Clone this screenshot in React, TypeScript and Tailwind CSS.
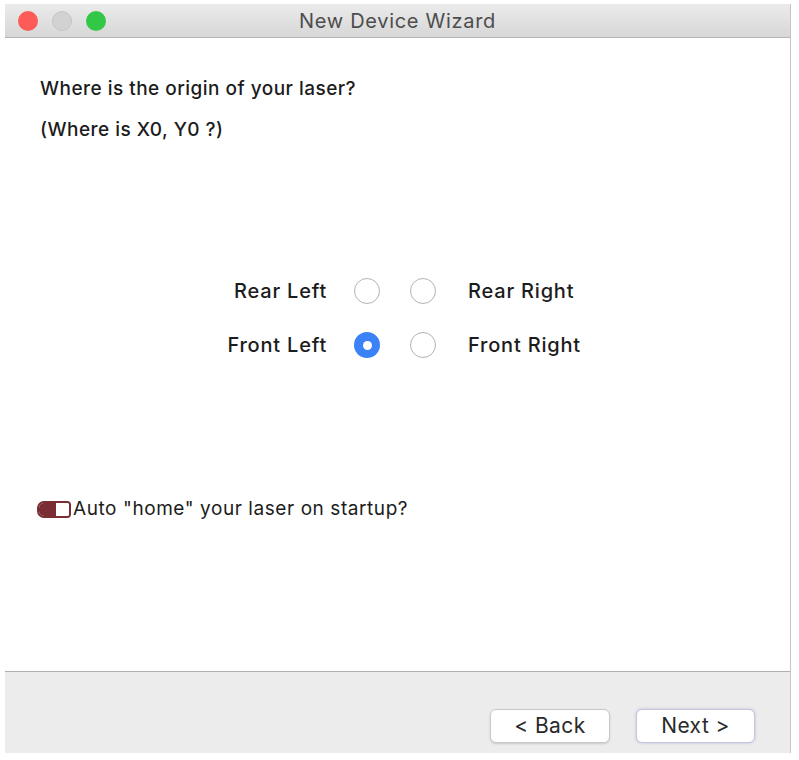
import React from "react"

const font = { fontFamily: "Inter, 'Liberation Sans', sans-serif" }

function Radio({ checked }: { checked?: boolean }) {
  if (checked) {
    return (
      <div className="w-[26px] h-[26px] rounded-full bg-[#3b82f6] flex items-center justify-center">
        <div className="w-[9px] h-[9px] rounded-full bg-white" />
      </div>
    )
  }
  return <div className="w-[26px] h-[26px] rounded-full border-[1.5px] border-[#b3b3b3] bg-white" />
}

function Toggle() {
  return (
    <div className="w-[34px] h-[17px] rounded-l-[7px] rounded-r-[4px] border-2 border-[#7a2e33] flex overflow-hidden">
      <div className="w-[17px] h-full bg-[#7a2e33]" />
      <div className="flex-1 bg-white" />
    </div>
  )
}

export default function App() {
  return (
    <div className="min-h-[760px] bg-white pt-[4px] pl-[5px]" style={font}>
      <div className="w-[786px] flex flex-col border-r border-[#c6c6c6]">
        {/* title bar */}
        <div className="h-[34px] flex items-center relative bg-gradient-to-b from-[#ebebeb] to-[#d7d7d7] border-b border-[#b4b4b4]">
          <div className="flex items-center gap-[14px] pl-[13px]">
            <div className="w-[20px] h-[20px] rounded-full bg-[#fc5b57]" />
            <div className="w-[20px] h-[20px] rounded-full bg-[#d2d2d2] border border-[#c4c4c4]" />
            <div className="w-[20px] h-[20px] rounded-full bg-[#33c748]" />
          </div>
          <div className="absolute inset-0 flex items-center justify-center text-[20px] text-[#4d4d4d] tracking-[0.035em]">
            New Device Wizard
          </div>
        </div>

        {/* content */}
        <div className="h-[633px] bg-white flex flex-col">
          <div className="pl-[35px] pt-[38px] text-[19px] font-medium text-[#1c1c1c] leading-[26px] tracking-[0.025em] flex flex-col gap-[15px]">
            <div>Where is the origin of your laser?</div>
            <div>(Where is X0, Y0 ?)</div>
          </div>

          <div className="mt-[134px] pl-[202px]">
            <div className="grid grid-cols-[147px_56px_58px_160px] gap-y-[26px] items-center text-[20px] leading-[28px] font-medium text-[#1c1c1c] tracking-[0.04em]">
              <div className="text-right pr-[27px]">Rear Left</div>
              <Radio />
              <Radio />
              <div>Rear Right</div>
              <div className="text-right pr-[27px]">Front Left</div>
              <Radio checked />
              <Radio />
              <div>Front Right</div>
            </div>
          </div>

          <div className="mt-[136px] pl-[32px] flex items-center gap-[2px] text-[19px] text-[#1c1c1c] tracking-[0.03em]">
            <Toggle />
            <span>Auto "home" your laser on startup?</span>
          </div>
        </div>

        {/* footer */}
        <div className="h-[82px] bg-[#ececec] border-t border-[#b0b0b0] flex items-start justify-end pr-[35px] pt-[37px] gap-[26px]">
          <button className="w-[120px] h-[34px] rounded-[6px] bg-white border border-[#c9c9c9] shadow-[0_1px_2px_rgba(0,0,0,0.15)] text-[21px] text-[#2a2a2a] tracking-[0.02em]">
            &lt; Back
          </button>
          <button className="w-[119px] h-[34px] rounded-[6px] bg-white border border-[#c3c6de] shadow-[0_0_3px_rgba(90,100,200,0.35)] text-[21px] text-[#2a2a2a] tracking-[0.02em]">
            Next &gt;
          </button>
        </div>
      </div>
    </div>
  )
}
